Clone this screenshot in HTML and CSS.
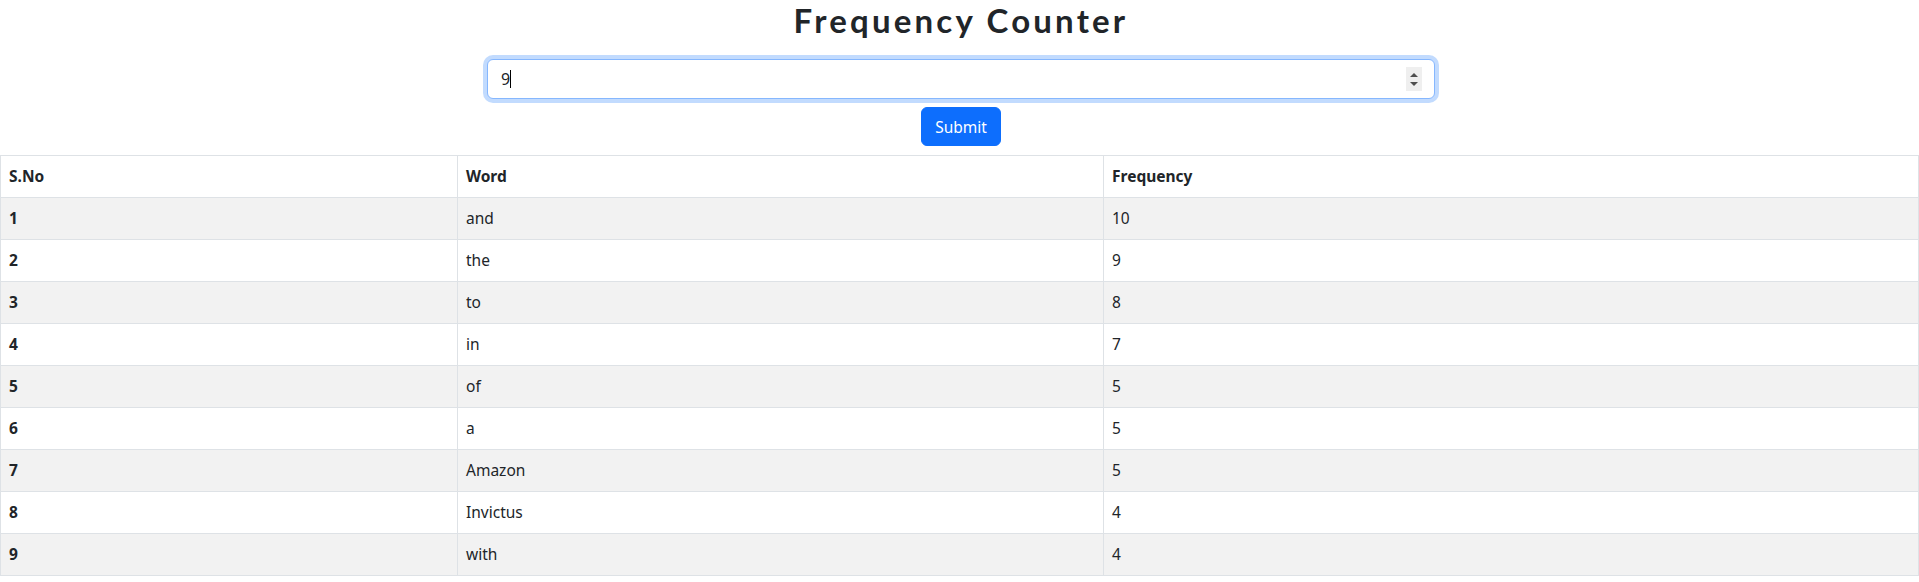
FILE: index.html
```html
<!DOCTYPE html>
<html lang="en">
<head>
<meta charset="utf-8">
<title>Frequency Counter</title>
<link rel="stylesheet" href="styles.css">
</head>
<body>
<header class="top">
  <h1 class="title">Frequency Counter</h1>
  <form class="form">
    <div class="field">
      <span class="field-value">9</span><span class="caret"></span>
      <span class="spacer"></span>
      <span class="spinner">
        <span class="tri-up"></span>
        <span class="tri-down"></span>
      </span>
    </div>
    <button type="button" class="btn">Submit</button>
  </form>
</header>
<table class="freq">
  <colgroup>
    <col class="c1"><col class="c2"><col class="c3">
  </colgroup>
  <thead>
    <tr><th>S.No</th><th>Word</th><th>Frequency</th></tr>
  </thead>
  <tbody>
    <tr><th>1</th><td>and</td><td>10</td></tr>
    <tr><th>2</th><td>the</td><td>9</td></tr>
    <tr><th>3</th><td>to</td><td>8</td></tr>
    <tr><th>4</th><td>in</td><td>7</td></tr>
    <tr><th>5</th><td>of</td><td>5</td></tr>
    <tr><th>6</th><td>a</td><td>5</td></tr>
    <tr><th>7</th><td>Amazon</td><td>5</td></tr>
    <tr><th>8</th><td>Invictus</td><td>4</td></tr>
    <tr><th>9</th><td>with</td><td>4</td></tr>
  </tbody>
</table>
</body>
</html>
```
FILE: styles.css
```css
* { box-sizing: border-box; }
html, body { margin: 0; padding: 0; background: #fff; }
body {
  font-family: "Noto Sans", "Open Sans", sans-serif;
  font-size: 15.5px;
  color: #212529;
}
.top {
  display: flex;
  flex-direction: column;
  align-items: center;
  padding-left: 3px;
}
.title {
  margin: 0;
  height: 41px;
  font-family: "Lato", "DejaVu Sans", sans-serif;
  font-weight: 700;
  font-size: 33px;
  line-height: 40px;
  letter-spacing: 3.2px;
  color: #212529;
}
.form {
  margin-top: 18px;
  display: flex;
  flex-direction: column;
  align-items: center;
  gap: 8px;
}
.field {
  width: 948px;
  height: 40px;
  display: flex;
  align-items: center;
  padding: 0 12px 0 13px;
  border: 1px solid #86b7fe;
  border-radius: 6px;
  box-shadow: 0 0 0 4px rgba(13, 110, 253, 0.25);
  font-size: 16px;
  background: #fff;
}
.field-value { line-height: 24px; color: #212529; }
.caret {
  width: 1px;
  height: 18px;
  background: #000;
}
.spacer { flex: 1; }
.spinner {
  width: 16px;
  height: 24px;
  background: #efefef;
  display: flex;
  flex-direction: column;
  align-items: center;
  justify-content: center;
  gap: 5px;
}
.tri-up, .tri-down {
  width: 0;
  height: 0;
  border-left: 4px solid transparent;
  border-right: 4px solid transparent;
}
.tri-up { border-bottom: 4px solid #4f4f4f; }
.tri-down { border-top: 4px solid #4f4f4f; }
.btn {
  font-family: "Noto Sans", "Open Sans", sans-serif;
  font-size: 15.5px;
  line-height: 24px;
  color: #fff;
  background: #0d6efd;
  border: 1px solid #0d6efd;
  border-radius: 6px;
  padding: 6px 12px;
  height: 39px;
  width: 80px;
  margin-bottom: 9px;
}
.freq {
  width: 100%;
  border-collapse: collapse;
  table-layout: fixed;
}
.c1 { width: 457px; }
.c2 { width: 646px; }
.freq th, .freq td {
  border: 1px solid #dee2e6;
  padding: 8px 8px;
  line-height: 25px;
  height: 42px;
  text-align: left;
  vertical-align: middle;
}
.freq th { font-weight: 700; }
.freq td { font-weight: 400; }
.freq tbody tr:nth-child(odd) { background: #f2f2f2; }
```
